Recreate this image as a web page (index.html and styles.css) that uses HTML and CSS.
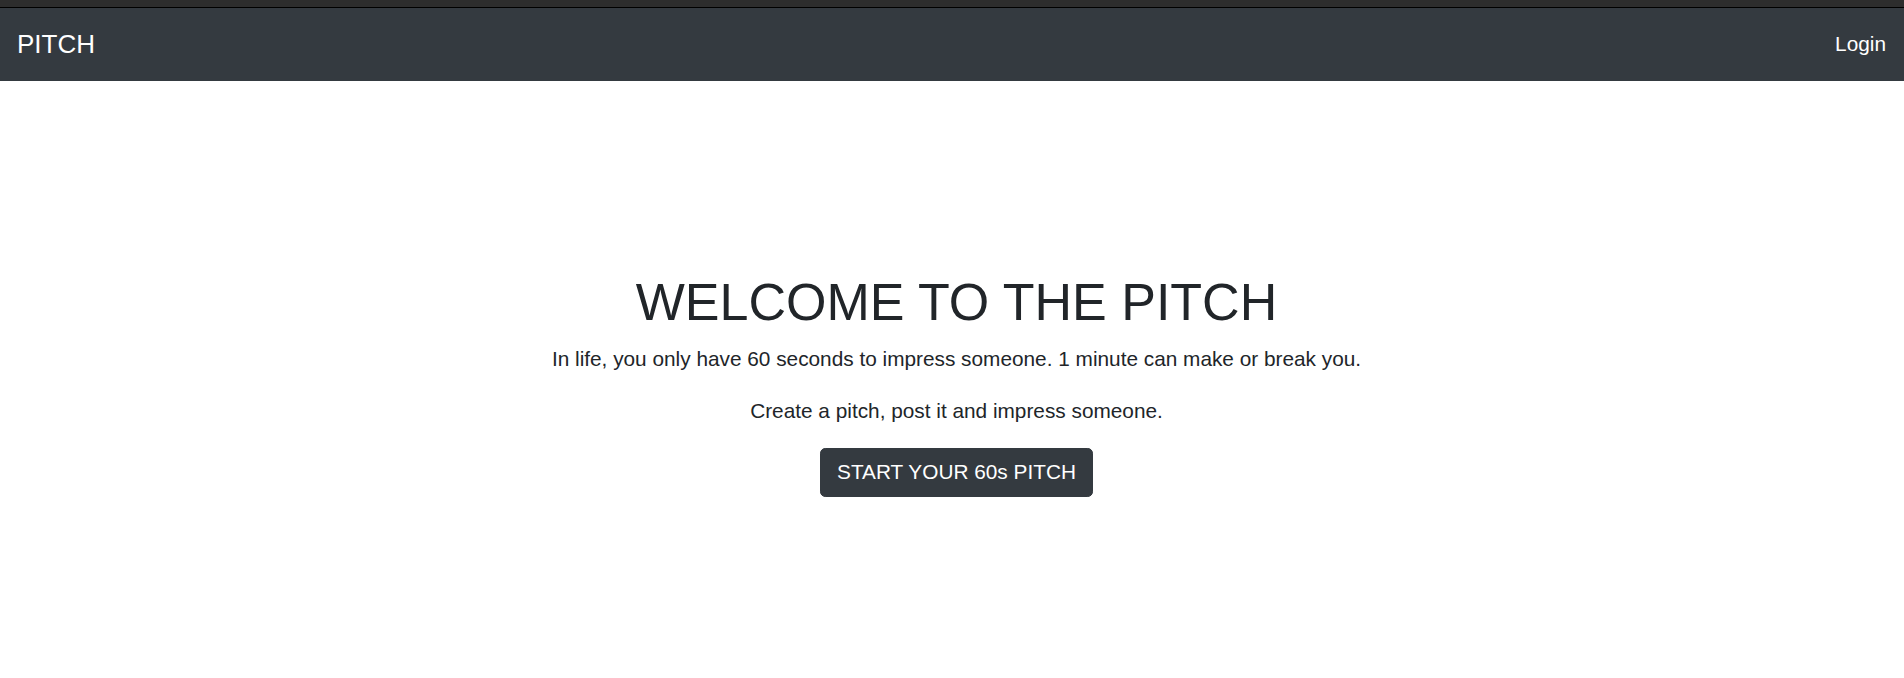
FILE: index.html
```html
<!DOCTYPE html>
<html lang="en">
<head>
<meta charset="utf-8">
<title>Pitch</title>
<link rel="stylesheet" href="styles.css">
</head>
<body>
<div class="top-strip"></div>
<nav class="navbar">
  <a class="brand" href="#">PITCH</a>
  <a class="nav-link" href="#">Login</a>
</nav>
<main class="hero">
  <h1 class="title">WELCOME TO THE PITCH</h1>
  <p class="text">In life, you only have 60 seconds to impress someone. 1 minute can make or break you.</p>
  <p class="text">Create a pitch, post it and impress someone.</p>
  <a class="btn" href="#">START YOUR 60s PITCH</a>
</main>
</body>
</html>
```
FILE: styles.css
```css
* { box-sizing: border-box; }
body {
  margin: 0;
  height: 678px;
  overflow: hidden;
  background: #fff;
  color: #212529;
  font-family: "Liberation Sans", Arial, sans-serif;
  font-size: 20.8px;
  line-height: 31px;
}
a { text-decoration: none; }
.top-strip {
  height: 8px;
  background: #2d2d2d;
  border-bottom: 1px solid #000;
}
.navbar {
  display: flex;
  align-items: center;
  justify-content: space-between;
  height: 73px;
  padding: 0 18px 0 17px;
  background: #343a40;
}
.brand { color: #fff; font-size: 26px; line-height: 39px; }
.nav-link { padding-bottom: 2px; color: #fff; }
.hero {
  display: flex;
  flex-direction: column;
  align-items: center;
  padding: 190px 0 0 9px;
}
.title {
  margin: 0 0 10px;
  font-size: 52px;
  font-weight: 400;
  line-height: 62px;
}
.text { margin: 0 0 21px; }
.btn {
  margin-top: 1px;
  padding: 7px 16.5px 9px;
  border: 1px solid #343a40;
  border-radius: 5.2px;
  background: #343a40;
  color: #fff;
}
```
